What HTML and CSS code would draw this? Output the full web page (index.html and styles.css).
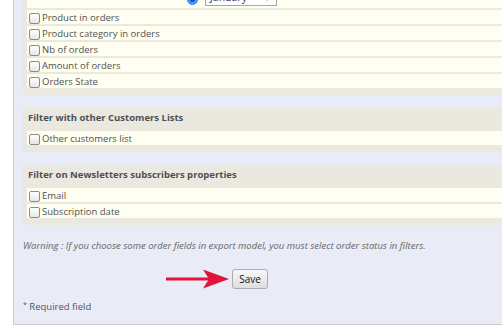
FILE: index.html
```html
<!DOCTYPE html>
<html lang="en">
<head>
    <meta charset="UTF-8">
    <meta name="viewport" content="width=device-width, initial-scale=1.0">
    <title>Export customers</title>
<link rel="stylesheet" href="styles.css">
</head>

<body>
    <div class="page">
        <div class="panel">
            <div class="group">
                <div class="row row-top">
                    <span class="spacer"></span>
                    <span class="radio"></span>
                    <span class="select">January <span class="caret">&#9662;</span></span>
                </div>
                <label class="row"><input type="checkbox">Product in orders</label>
                <label class="row"><input type="checkbox">Product category in orders</label>
                <label class="row"><input type="checkbox">Nb of orders</label>
                <label class="row"><input type="checkbox">Amount of orders</label>
                <label class="row"><input type="checkbox">Orders State</label>
            </div>

            <div class="group">
                <div class="group-title">Filter with other Customers Lists</div>
                <label class="row"><input type="checkbox">Other customers list</label>
            </div>

            <div class="group">
                <div class="group-title">Filter on Newsletters subscribers properties</div>
                <label class="row"><input type="checkbox">Email</label>
                <label class="row"><input type="checkbox">Subscription date</label>
            </div>

            <p class="warning">Warning : If you choose some order fields in export model, you must select order status in filters.</p>

            <div class="actions">
                <svg class="arrow" width="63" height="20" viewBox="0 0 63 20">
                    <rect x="0" y="8.5" width="44" height="3" fill="#e2143b"/>
                    <polygon points="37,0.5 63,10 37,19.5 43,10" fill="#e2143b"/>
                </svg>
                <button class="save">Save</button>
            </div>

            <p class="required"><span class="star">*</span> Required field</p>
        </div>
    </div>
</body>
</html>
```

FILE: styles.css
```css
body {
    margin: 0;
    font-family: "Open Sans", sans-serif;
    font-size: 9.5px;
    color: #505050;
    background-color: #ffffff;
    overflow: hidden;
}

.page {
    padding-left: 13px;
}

.panel {
    display: flex;
    flex-direction: column;
    margin-top: -13px;
    padding: 0 0 10px 9px;
    background-color: #e9ecf6;
    border-left: 1px solid #c7cad6;
    border-bottom: 1px solid #c7cad6;
}

.group {
    display: flex;
    flex-direction: column;
    gap: 2px;
    margin-bottom: 13px;
    padding: 0 0 7px 4px;
    background-color: #ebe8df;
}

.group:last-of-type {
    padding-bottom: 6px;
}

.group-title {
    height: 21px;
    line-height: 20px;
    padding-left: 1px;
    font-weight: bold;
    color: #4e4f58;
}

.row {
    display: flex;
    align-items: center;
    height: 14px;
    line-height: 13px;
    padding-left: 2px;
    background-color: #fefff0;
}

.row input {
    appearance: none;
    -webkit-appearance: none;
    align-self: flex-end;
    box-sizing: border-box;
    width: 11px;
    height: 11px;
    margin: 0 2px 0 0;
    border: 1px solid #8c8c8c;
    border-radius: 2px;
    background: linear-gradient(#ffffff, #e6e6e6);
}

.row-top {
    height: 21px;
    align-items: flex-end;
}

.spacer {
    width: 158px;
}

.radio {
    box-sizing: border-box;
    width: 11px;
    height: 11px;
    margin: 0 7px 3px 0;
    border-radius: 50%;
    border: 1px solid #2b6fd6;
    background: radial-gradient(circle, #1557c9 0, #1557c9 35%, #4d92f2 45%, #7db0f6 100%);
}

.select {
    box-sizing: border-box;
    display: flex;
    justify-content: space-between;
    align-items: center;
    width: 72px;
    height: 17px;
    margin-bottom: 2px;
    padding: 0 6px 0 4px;
    border: 1px solid #a6a6a6;
    background-color: #ffffff;
    font-size: 10.5px;
    color: #3a3a5a;
}

.caret {
    font-size: 9px;
    color: #444;
}

.warning {
    margin: 1px 0 0;
    line-height: 14px;
    font-style: italic;
    color: #666666;
}

.actions {
    display: flex;
    align-items: center;
    gap: 3px;
    margin-top: 16px;
    padding-left: 143px;
}

.save {
    box-sizing: border-box;
    width: 36px;
    height: 20px;
    padding: 0;
    font-family: "Open Sans", sans-serif;
    font-size: 10px;
    color: #111111;
    border: 1px solid #acacac;
    border-radius: 3px;
    background: linear-gradient(#f7f7f7, #dedede);
    cursor: pointer;
}

.required {
    margin: 11px 0 0;
    line-height: 14px;
    color: #555555;
}

.star {
    display: inline-block;
    vertical-align: top;
    line-height: 9px;
    font-size: 7px;
}
```
